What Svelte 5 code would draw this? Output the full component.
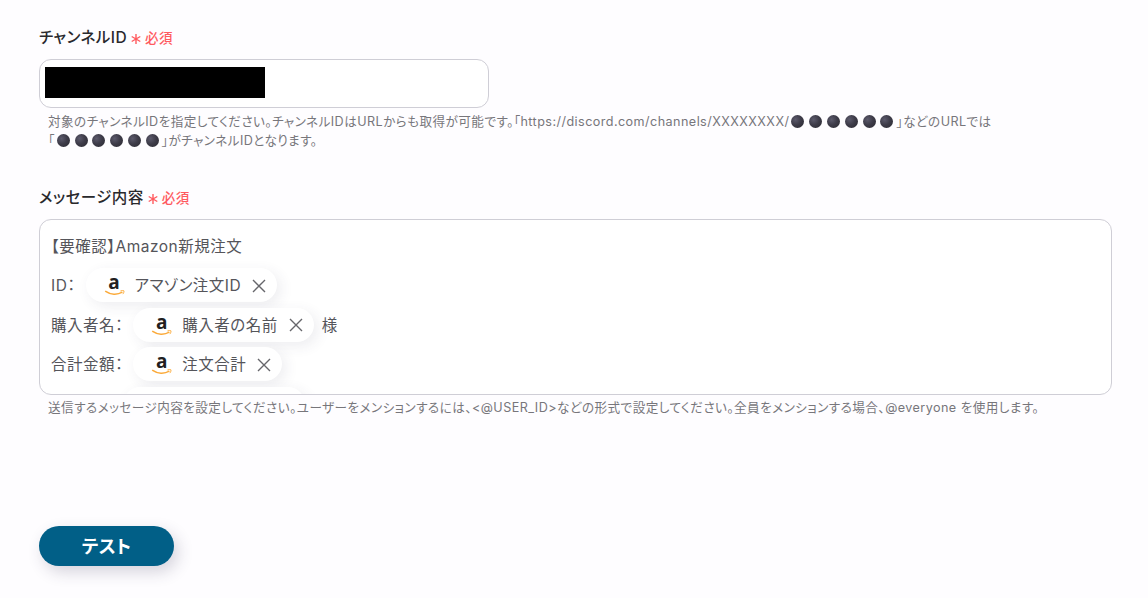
<script lang="ts">
  interface Line {
    before: string
    tag: string
    after?: string
  }

  const moons = [0, 1, 2, 3, 4, 5]

  const lines: Line[] = [
    { before: 'ID：', tag: 'アマゾン注文ID' },
    { before: '購入者名：', tag: '購入者の名前', after: '様' },
    { before: '合計金額：', tag: '注文合計' },
    { before: '', tag: '' }
  ]
</script>

{#snippet required()}
  <svg class="asterisk" viewBox="0 0 10 10" aria-hidden="true">
    <path d="M5 0v10M.7 2.5l8.6 5M9.3 2.5l-8.6 5" />
  </svg>
  <span class="required">必須</span>
{/snippet}

{#snippet moonRow()}
  <span class="moons">
    {#each moons as moon (moon)}
      <i class="moon"></i>
    {/each}
  </span>
{/snippet}

<main class="form">
  <section class="field channel">
    <div class="label">
      <span class="name">チャンネルID</span>
      {@render required()}
    </div>
    <div class="input">
      <span class="mask"></span>
    </div>
    <p class="help">
      <span class="row"><span class="ja">対象のチャンネルIDを指定してください。チャンネルIDはURLからも取得が可能です。「https://discord.com/channels/XXXXXXXX/</span>{@render moonRow()}<span>」などのURLでは</span></span>
      <span class="row"><span>「</span>{@render moonRow()}<span>」がチャンネルIDとなります。</span></span>
    </p>
  </section>

  <section class="field message">
    <div class="label">
      <span class="name">メッセージ内容</span>
      {@render required()}
    </div>
    <div class="editor">
      <div class="line first">【要確認】Amazon新規注文</div>
      {#each lines as line}
        <div class="line">
          {#if line.tag}
            <span class="before">{line.before}</span>
            <span class="tag">
              <span class="amazon">
                <span class="letter">a</span>
                <svg viewBox="0 0 22 6" aria-hidden="true">
                  <path class="smile" d="M1.2 1.2C6.5 5 13.5 5 18.4 2.2" />
                  <path class="tip" d="M16.4 1c1.4-.5 2.8-.6 3.5-.2.3.8-.2 2.3-1.1 3.3" />
                </svg>
              </span>
              <span class="tag-name">{line.tag}</span>
              <svg class="close" viewBox="0 0 14 14" aria-hidden="true">
                <path d="M1 1l12 12M13 1L1 13" />
              </svg>
            </span>
            {#if line.after}
              <span class="after">{line.after}</span>
            {/if}
          {:else}
            <span class="tag empty"></span>
          {/if}
        </div>
      {/each}
    </div>
    <p class="help">
      <span class="row">送信するメッセージ内容を設定してください。ユーザーをメンションするには、&lt;@USER_ID&gt;などの形式で設定してください。全員をメンションする場合、@everyone を使用します。</span>
    </p>
  </section>

  <button type="button">テスト</button>
</main>

<style>
  :global(body) {
    background: #fefdff;
  }

  .form {
    box-sizing: border-box;
    height: 598px;
    padding: 26px 36px 0 39px;
    overflow: hidden;
    font-family: Inter, 'Noto Sans CJK JP', sans-serif;
    font-feature-settings: 'palt';
    color: #55555a;
  }

  .field {
    display: flex;
    flex-direction: column;
  }

  .message {
    margin-top: 36px;
  }

  .label {
    display: flex;
    align-items: center;
    height: 20px;
    color: #29292d;
    font-size: 15.5px;
    font-weight: 500;
    letter-spacing: 0.45px;
    white-space: nowrap;
  }

  .asterisk {
    width: 10px;
    height: 10px;
    margin: 5px 4px 0 4px;
    fill: none;
    stroke: #ff5a5f;
    stroke-width: 1.4;
  }

  .required {
    margin-top: 1px;
    color: #ff5a5f;
    font-size: 13.5px;
  }

  .input {
    box-sizing: border-box;
    width: 450px;
    height: 49px;
    margin-top: 13px;
    padding: 7px 5px;
    border: 1px solid #cfced6;
    border-radius: 12px;
    background: #fff;
  }

  .mask {
    display: block;
    width: 220px;
    height: 31px;
    background: #000;
  }

  .help {
    margin: 4px 0 0 9px;
    color: #77767b;
    font-size: 12.6px;
    line-height: 19px;
    letter-spacing: 0.44px;
  }

  .message .help {
    margin-top: 3px;
  }

  .row {
    display: flex;
    height: 19px;
    white-space: pre;
  }

  .moons {
    display: flex;
    align-items: center;
    gap: 4.8px;
    padding: 0 3px 0 2px;
  }

  .moon {
    width: 13px;
    height: 13px;
    border-radius: 50%;
    background: radial-gradient(circle at 35% 35%, #5c5a6c 0, #3e3c49 45%, #29282f 100%);
  }

  .editor {
    box-sizing: border-box;
    height: 176px;
    margin-top: 13px;
    padding: 6px 11px 0;
    overflow: hidden;
    border: 1px solid #cfced6;
    border-radius: 12px;
    background: #fff;
    font-size: 15.5px;
    letter-spacing: 0.5px;
  }

  .line {
    display: flex;
    align-items: center;
    height: 39.5px;
    white-space: nowrap;
  }

  .first,
  .before,
  .tag-name,
  .after {
    padding-bottom: 2px;
    box-sizing: border-box;
  }

  .tag {
    display: flex;
    align-items: center;
    box-sizing: border-box;
    height: 34px;
    margin: 0 8px 0 10px;
    padding: 0 11px 0 18px;
    border-radius: 17px;
    background: #fff;
    box-shadow: 4px 4px 14px rgba(60, 50, 90, 0.09);
  }

  .empty {
    width: 182px;
    margin-left: 72px;
  }

  .amazon {
    display: flex;
    flex-direction: column;
    align-items: center;
    width: 22px;
    margin-right: 9px;
  }

  .letter {
    padding-right: 1px;
    color: #221f1f;
    font-family: 'Open Sans', sans-serif;
    font-size: 19px;
    font-weight: 700;
    line-height: 16px;
    letter-spacing: 0;
  }

  .amazon svg {
    width: 22px;
    height: 6px;
  }

  .smile,
  .tip {
    fill: none;
    stroke: #fbab3c;
    stroke-width: 1.5;
  }

  .tip {
    stroke-width: 1;
  }

  .close {
    width: 14px;
    height: 14px;
    margin: 1px 0 0 11px;
    fill: none;
    stroke: #66666b;
    stroke-width: 1.4;
  }

  button {
    display: block;
    width: 135px;
    height: 40px;
    margin-top: 109px;
    padding: 0 0 2px;
    border: 0;
    border-radius: 20px;
    background: #015f87;
    box-shadow: 4px 6px 16px rgba(50, 45, 80, 0.2);
    color: #fff;
    font: inherit;
    font-size: 18px;
    font-weight: 700;
    letter-spacing: 0.3px;
  }
</style>
